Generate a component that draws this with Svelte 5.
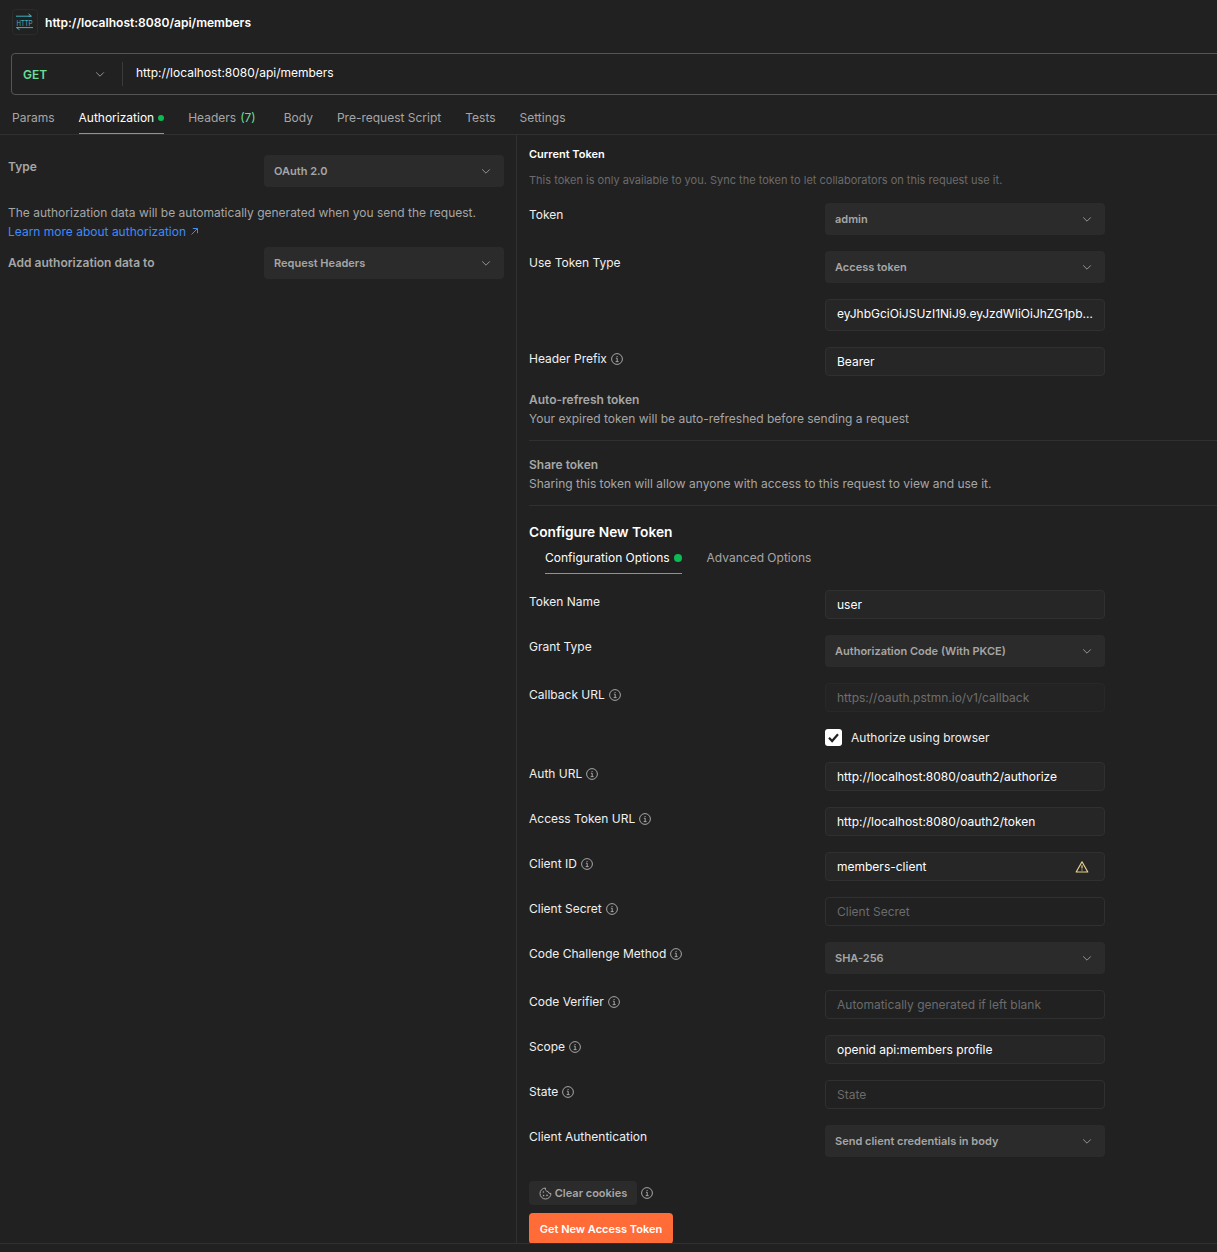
<script>
  const tabs = [
    { label: 'Params' },
    { label: 'Authorization', active: true, dot: true },
    { label: 'Headers', count: '(7)' },
    { label: 'Body' },
    { label: 'Pre-request Script' },
    { label: 'Tests' },
    { label: 'Settings' }
  ];

  const currentRows = [
    { label: 'Token', kind: 'select', value: 'admin' },
    { label: 'Use Token Type', kind: 'select', value: 'Access token' },
    { label: '', kind: 'token', value: 'eyJhbGciOiJSUzI1NiJ9.eyJzdWIiOiJhZG1pbiIsImF1ZCI6Im1lbWJlcnMtY2xpZW50In0' },
    { label: 'Header Prefix', info: true, kind: 'input', value: 'Bearer' }
  ];

  const configRows = [
    { label: 'Token Name', kind: 'input', value: 'user' },
    { label: 'Grant Type', kind: 'select', value: 'Authorization Code (With PKCE)' },
    { label: 'Callback URL', info: true, kind: 'disabled', value: 'https://oauth.pstmn.io/v1/callback' },
    { label: '', kind: 'check', value: 'Authorize using browser' },
    { label: 'Auth URL', info: true, kind: 'input', value: 'http://localhost:8080/oauth2/authorize' },
    { label: 'Access Token URL', info: true, kind: 'input', value: 'http://localhost:8080/oauth2/token' },
    { label: 'Client ID', info: true, kind: 'input', value: 'members-client', warn: true },
    { label: 'Client Secret', info: true, kind: 'placeholder', value: 'Client Secret' },
    { label: 'Code Challenge Method', info: true, kind: 'select', value: 'SHA-256' },
    { label: 'Code Verifier', info: true, kind: 'placeholder', value: 'Automatically generated if left blank' },
    { label: 'Scope', info: true, kind: 'input', value: 'openid api:members profile' },
    { label: 'State', info: true, kind: 'placeholder', value: 'State' },
    { label: 'Client Authentication', kind: 'select', value: 'Send client credentials in body' }
  ];
</script>

{#snippet chevron()}
  <svg class="chev" width="12" height="12" viewBox="0 0 12 12" fill="none" aria-hidden="true">
    <path d="M2.2 4.4 6 8.2 9.8 4.4" stroke="currentColor" />
  </svg>
{/snippet}

{#snippet info()}
  <svg class="info" width="12" height="12" viewBox="0 0 12 12" fill="none" aria-hidden="true">
    <circle cx="6" cy="6" r="5.4" stroke="currentColor" />
    <path d="M4.9 5.2H6.2V8.6M4.7 8.6H7.6" stroke="currentColor" />
    <path d="M5.6 3H6.6V4H5.6Z" fill="currentColor" />
  </svg>
{/snippet}

{#snippet row(r)}
  <div class="row">
    <div class="label">
      <span>{r.label}</span>
      {#if r.info}{@render info()}{/if}
    </div>
    {#if r.kind === 'select'}
      <div class="select"><span>{r.value}</span>{@render chevron()}</div>
    {:else if r.kind === 'token'}
      <div class="input tall"><span class="clip">{r.value}</span></div>
    {:else if r.kind === 'check'}
      <div class="check">
        <span class="box">
          <svg width="13" height="13" viewBox="0 0 13 13" fill="none" aria-hidden="true">
            <path d="M2 6.8 5.1 10 11 3.2" stroke="#212121" stroke-width="2.2" />
          </svg>
        </span>
        <span class="check-text">{r.value}</span>
      </div>
    {:else}
      <div class="input" class:muted={r.kind === 'disabled'} class:ph={r.kind === 'placeholder'}>
        <span>{r.value}</span>
        {#if r.warn}
          <svg class="warn" width="14" height="14" viewBox="0 0 14 14" fill="none" aria-hidden="true">
            <path d="M7 1.8 12.8 12H1.2Z" stroke="#e8d28a" stroke-width="1.2" stroke-linejoin="round" />
            <path d="M7 5.2V8.6M7 9.5V10.6" stroke="#e8d28a" stroke-width="1.2" />
          </svg>
        {/if}
      </div>
    {/if}
  </div>
{/snippet}

<div class="page">
  <header class="title">
    <span class="logo">
      <svg width="20" height="18" viewBox="0 0 20 18" fill="none" aria-hidden="true">
        <path d="M1 3.2H16M13.5 .8 16.5 3.2 13.5 3.2" stroke="#3fb0c0" stroke-width="1" />
        <text x="1.5" y="12.6" textLength="16" lengthAdjust="spacingAndGlyphs" class="http">HTTP</text>
        <path d="M1.5 14.6H18M4.5 16.8 1.5 14.6 4.5 14.6" stroke="#3fb0c0" stroke-width="1" />
      </svg>
    </span>
    <span class="name">http://localhost:8080/api/members</span>
  </header>

  <div class="urlbar">
    <div class="method"><span>GET</span>{@render chevron()}</div>
    <div class="url">http://localhost:8080/api/members</div>
  </div>

  <nav class="tabs">
    {#each tabs as t}
      <div class="tab" class:active={t.active}>{t.label}{#if t.count}<em>{t.count}</em>{/if}{#if t.dot}<i class="dot"></i>{/if}</div>
    {/each}
  </nav>

  <main class="panes">
    <section class="left">
      <div class="lrow type">
        <div class="llabel">Type</div>
        <div class="select"><span>OAuth 2.0</span>{@render chevron()}</div>
      </div>
      <p class="explain">
        The authorization data will be automatically generated when you send the request.<br />
        <span class="link">Learn more about authorization
          <svg width="9" height="9" viewBox="0 0 9 9" fill="none" aria-hidden="true">
            <path d="M1.5 7.5 7.5 1.5M2.8 1.5H7.5V6.2" stroke="currentColor" />
          </svg>
        </span>
      </p>
      <div class="lrow add">
        <div class="llabel">Add authorization data to</div>
        <div class="select"><span>Request Headers</span>{@render chevron()}</div>
      </div>
    </section>

    <section class="right">
      <h3>Current Token</h3>
      <p class="hint">This token is only available to you. Sync the token to let collaborators on this request use it.</p>
      <div class="rows">
        {#each currentRows as r}{@render row(r)}{/each}
      </div>

      <div class="note">
        <h4>Auto-refresh token</h4>
        <p>Your expired token will be auto-refreshed before sending a request</p>
      </div>
      <div class="note">
        <h4>Share token</h4>
        <p>Sharing this token will allow anyone with access to this request to view and use it.</p>
      </div>

      <h2>Configure New Token</h2>
      <div class="subtabs">
        <div class="subtab active">Configuration Options<i class="dot"></i></div>
        <div class="subtab">Advanced Options</div>
      </div>

      <div class="rows config">
        {#each configRows as r}{@render row(r)}{/each}
      </div>

      <div class="cookies">
        <button class="clear" type="button">
          <svg width="13" height="13" viewBox="0 0 13 13" fill="none" aria-hidden="true">
            <path d="M6.5 1A5.5 5.5 0 1 0 12 6.5 2.6 2.6 0 0 1 9 4.5 2.6 2.6 0 0 1 6.5 1Z" stroke="currentColor" />
            <circle cx="4.4" cy="5" r=".8" fill="currentColor" />
            <circle cx="4.6" cy="8.6" r=".8" fill="currentColor" />
            <circle cx="8" cy="8.4" r=".8" fill="currentColor" />
          </svg>
          Clear cookies
        </button>
        {@render info()}
      </div>
      <button class="primary" type="button">Get New Access Token</button>
    </section>
  </main>
  <div class="footer"></div>
</div>

<style>
  :global(body) {
    margin: 0;
    background: #212121;
  }
  .page {
    width: 1217px;
    height: 1252px;
    overflow: hidden;
    display: flex;
    flex-direction: column;
    background: #212121;
    color: #fff;
    font: 400 13px/20px Inter, "Liberation Sans", sans-serif;
  }
  p, h2, h3, h4 { margin: 0; }

  .title {
    display: flex;
    align-items: center;
    gap: 7px;
    height: 26px;
    margin: 9px 0 18px 12px;
  }
  .logo {
    width: 26px;
    height: 26px;
    box-sizing: border-box;
    display: flex;
    align-items: center;
    justify-content: center;
    border: 1px solid #2b2b2b;
    border-radius: 4px;
  }
  .http {
    font: 400 9.5px "Liberation Sans", sans-serif;
    fill: #3fb0c0;
  }
  .name { font-weight: 600; font-size: 12.05px; padding-top: 1px; }

  .urlbar {
    display: flex;
    align-items: center;
    flex: none;
    width: 1240px;
    height: 42px;
    box-sizing: border-box;
    margin-left: 11px;
    border: 1px solid #555;
    border-radius: 4px;
  }
  .method {
    width: 111px;
    height: 24px;
    box-sizing: border-box;
    padding: 2px 16px 0 11px;
    display: flex;
    align-items: center;
    justify-content: space-between;
    border-right: 1px solid #3a3a3a;
    color: #6bdd9a;
    font-weight: 600;
    font-size: 12px;
  }
  .method .chev { margin-top: -2px; }
  .url { margin: -2px 0 0 13px; font-size: 12px; }

  .tabs {
    display: flex;
    gap: 24px;
    height: 40px;
    box-sizing: border-box;
    padding: 0 12px;
    border-bottom: 1px solid #303030;
  }
  .tab {
    height: 39px;
    box-sizing: border-box;
    padding-top: 13px;
    line-height: 20px;
    font-size: 12px;
    color: #a6a6a6;
    white-space: nowrap;
  }
  .tab:nth-child(3) { padding-right: 4px; }
  .tab em { font-style: normal; color: #6bdd9a; margin-left: 4px; }
  .tab.active { color: #fff; border-bottom: 1px solid #ff6c37; }
  .dot {
    display: inline-block;
    width: 6px;
    height: 6px;
    margin: 0 0 1px 4px;
    border-radius: 50%;
    background: #0cbb52;
    vertical-align: middle;
  }

  .panes { flex: 1; display: flex; min-height: 0; }
  .left {
    width: 517px;
    flex: none;
    box-sizing: border-box;
    padding: 20px 12px 0 8px;
    border-right: 1px solid #303030;
  }
  .lrow {
    display: grid;
    grid-template-columns: 256px 240px;
  }
  .llabel {
    font-weight: 600;
    font-size: 12px;
    line-height: 24px;
    color: #a6a6a6;
  }
  .add .llabel { line-height: 32px; }
  .explain {
    margin: 16px 0 6px;
    line-height: 19px;
    font-size: 12px;
    color: #a6a6a6;
  }
  .link { color: #3d8bfd; }
  .link svg { margin-left: 1px; }

  .right {
    flex: 1;
    min-width: 0;
    padding: 9px 0 0 12px;
  }
  h3 { font-size: 11px; font-weight: 600; line-height: 20px; }
  .hint {
    margin-top: 6px;
    font-size: 11px;
    color: #6b6b6b;
  }
  .rows {
    margin-top: 13px;
    display: flex;
    flex-direction: column;
    gap: 16px;
  }
  .rows.config { margin-top: 16px; }
  .row {
    display: grid;
    grid-template-columns: 296px 280px;
    align-items: start;
  }
  .label {
    display: flex;
    align-items: center;
    gap: 4px;
    padding-top: 1px;
    line-height: 22px;
    font-size: 12px;
    color: #f0f0f0;
  }
  .info { color: #a6a6a6; flex: none; }

  .select {
    height: 32px;
    box-sizing: border-box;
    padding: 0 12px 0 10px;
    display: flex;
    align-items: center;
    justify-content: space-between;
    background: #2b2b2b;
    border-radius: 4px;
    font-weight: 600;
    font-size: 11px;
    color: #a6a6a6;
  }
  .chev { color: #949494; flex: none; }
  .input {
    height: 29px;
    box-sizing: border-box;
    padding: 0 11px;
    display: flex;
    align-items: center;
    justify-content: space-between;
    background: #262626;
    border: 1px solid #303030;
    border-radius: 4px;
    font-size: 12px;
    color: #fff;
    white-space: nowrap;
  }
  .input.tall { height: 32px; padding-bottom: 2px; }
  .clip {
    flex: 1;
    min-width: 0;
    overflow: hidden;
    text-overflow: ellipsis;
  }
  .input.muted { color: #6e6e6e; background: #232323; border-color: #282828; }
  .input.ph { color: #6b6b6b; background: #212121; }
  .warn { margin-right: 4px; }

  .check {
    height: 18px;
    display: flex;
    align-items: center;
    gap: 9px;
    font-size: 12px;
    color: #f0f0f0;
  }
  .check-text { padding-top: 1px; }
  .box {
    width: 17px;
    height: 17px;
    margin-top: 1px;
    display: flex;
    align-items: center;
    justify-content: center;
    background: #fff;
    border-radius: 3px;
  }

  .note {
    height: 65px;
    box-sizing: border-box;
    padding-top: 14px;
    border-bottom: 1px solid #303030;
    font-size: 12px;
    line-height: 19px;
    color: #a6a6a6;
  }
  .note h4 { font-size: 12px; font-weight: 600; }

  h2 {
    margin-top: 16px;
    font-size: 13.75px;
    font-weight: 600;
    line-height: 21px;
  }
  .subtabs {
    display: flex;
    gap: 25px;
    margin: 0 0 0 16px;
  }
  .subtab {
    height: 31px;
    box-sizing: border-box;
    padding-top: 5px;
    font-size: 12px;
    color: #a6a6a6;
  }
  .subtab.active { color: #fff; border-bottom: 1px solid #ff6c37; }
  .subtab .dot { width: 8px; height: 8px; margin-left: 4px; }

  .cookies {
    margin-top: 24px;
    display: flex;
    align-items: center;
    gap: 4px;
  }
  .clear {
    height: 24px;
    width: 108px;
    padding: 0;
    display: flex;
    align-items: center;
    justify-content: center;
    gap: 3px;
    border: 0;
    border-radius: 4px;
    background: #2b2b2b;
    color: #a6a6a6;
    font: 600 11px Inter, sans-serif;
  }
  .primary {
    display: block;
    margin-top: 8px;
    width: 144px;
    height: 31px;
    padding: 0;
    border: 0;
    border-radius: 4px;
    background: #ff6c37;
    color: #fff;
    font: 600 11px Inter, sans-serif;
  }
  .footer {
    height: 8px;
    flex: none;
    border-top: 1px solid #303030;
  }
</style>
